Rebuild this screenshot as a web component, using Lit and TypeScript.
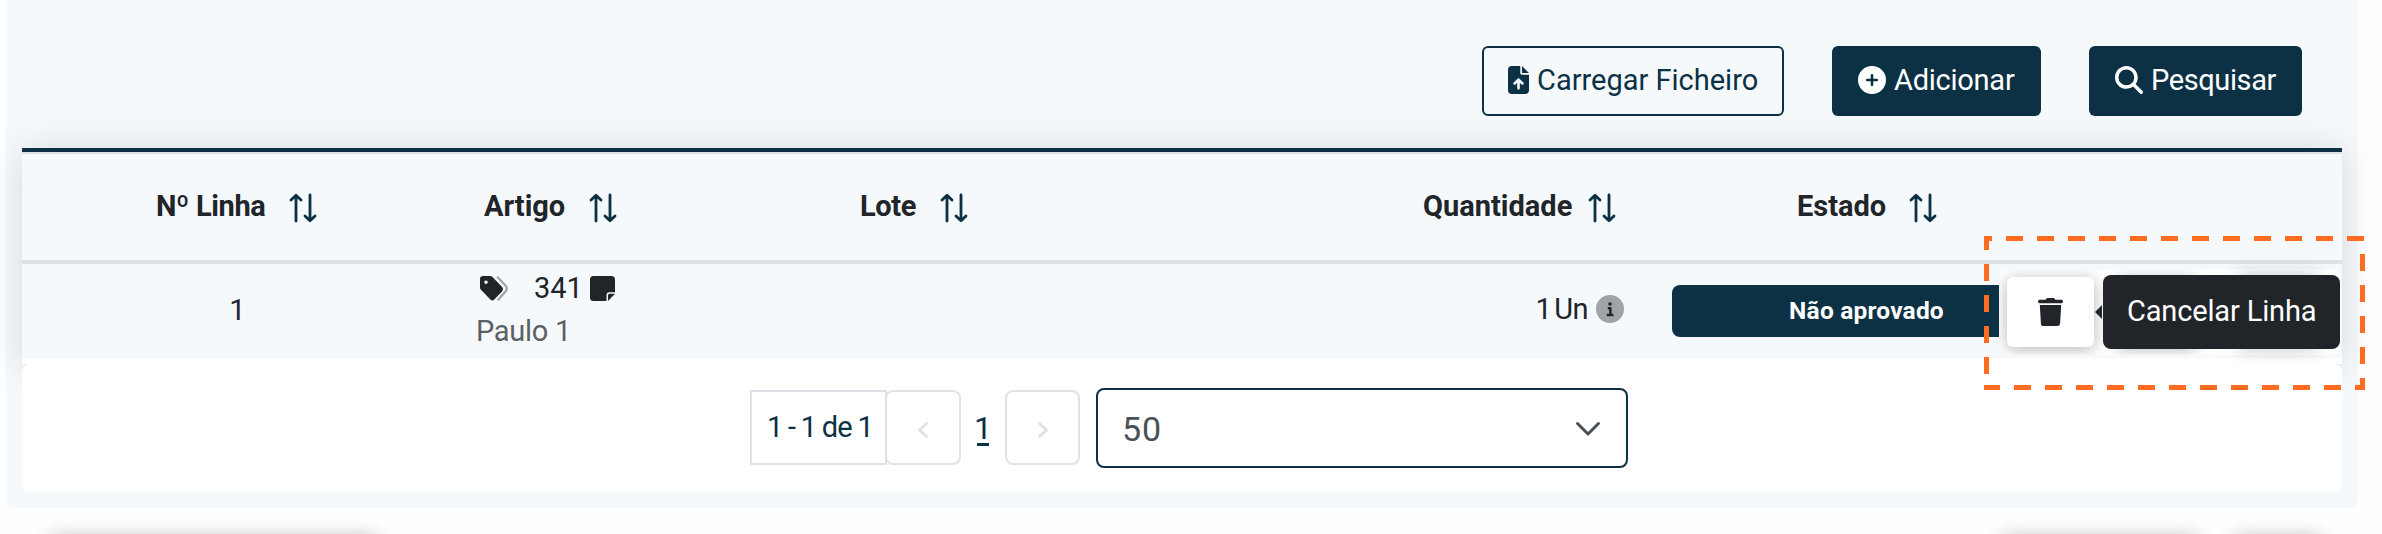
import { LitElement, html, css, svg } from "lit";
import { customElement } from "lit/decorators.js";

const icon = (cls: string, box: string, body: unknown) =>
  html`<svg class="icon ${cls}" viewBox=${box} preserveAspectRatio="none" aria-hidden="true">${body}</svg>`;

const fileUp = () => icon("file", "0 0 384 512", svg`<path d="M64 0C28.7 0 0 28.7 0 64V448c0 35.3 28.7 64 64 64H320c35.3 0 64-28.7 64-64V160H256c-17.7 0-32-14.3-32-32V0H64zM256 0V128H384L256 0zM216 408c0 13.3-10.7 24-24 24s-24-10.7-24-24V305.9l-31 31c-9.4 9.4-24.6 9.4-33.9 0s-9.4-24.6 0-33.9l72-72c9.4-9.4 24.6-9.4 33.9 0l72 72c9.4 9.4 9.4 24.6 0 33.9s-24.6 9.4-33.9 0l-31-31V408z"/>`);
const plus = () => icon("sq", "0 0 512 512", svg`<path d="M256 512A256 256 0 1 0 256 0a256 256 0 1 0 0 512zM232 344V280H168c-13.3 0-24-10.7-24-24s10.7-24 24-24h64V168c0-13.3 10.7-24 24-24s24 10.7 24 24v64h64c13.3 0 24 10.7 24 24s-10.7 24-24 24H280v64c0 13.3-10.7 24-24 24s-24-10.7-24-24z"/>`);
const search = () => icon("sq", "0 0 512 512", svg`<path d="M416 208c0 45.9-14.9 88.3-40 122.7L502.6 457.4c12.5 12.5 12.5 32.8 0 45.3s-32.8 12.5-45.3 0L330.7 376c-34.4 25.2-76.8 40-122.7 40C93.1 416 0 322.9 0 208S93.1 0 208 0S416 93.1 416 208zM208 352a144 144 0 1 0 0-288 144 144 0 1 0 0 288z"/>`);
const sort = () => icon("sort", "0 0 26 28", svg`<g class="line"><path d="M6 27V1.5M1 6 6 1.2 11 6"/><path d="M20 1V26.500M15 22 20 26.800 25 22"/></g>`);
const tags = () => icon("tags", "0 0 28 25", svg`<path fill-rule="evenodd" d="M0 3.200V11.500Q0 12.800 .9 13.800L10.400 23.600Q12.400 25.400 14.300 23.600L22.200 15.200Q24 13 22.200 11L12.500 1Q11.500 0 10.200 0H3.200Q0 0 0 3.200ZM6 4.400A1.800 1.800 0 1 1 5.990 4.400Z"/><path class="tagback" d="M17.600 1.300 25.500 9.600Q28 12.500 25.500 15.600L18.200 23.700"/>`);
const note = () => icon("note", "0 0 25 25", svg`<path d="M3.500 0H21.500Q25 0 25 3.500V16.300H19.500Q16.500 16.300 16.500 19.300V25H3.500Q0 25 0 21.500V3.500Q0 0 3.500 0Z"/><path d="M18 25V19.300Q18 17.800 19.500 17.800H25Z"/>`);
const info = () => icon("sq", "0 0 28 28", svg`<circle cx="14" cy="14" r="14" fill="#a0a4a8"/><circle cx="14" cy="9" r="1.800"/><path class="infoline" d="M11.800 13.200H14.400V19.800M10.800 20H17.500"/>`);
const trash = () => icon("trash", "0 0 25 28", svg`<path d="M1.500 1.800H7.500L8.300.7Q8.800 0 9.700 0H15.300Q16.200 0 16.700.7L17.500 1.800H23.500Q25 1.800 25 3.500T23.500 5.300H1.500Q0 5.300 0 3.500T1.500 1.800ZM1.800 7H23.200L22.100 25.400Q21.900 28 19.400 28H5.600Q3.100 28 2.900 25.400Z"/>`);
const chevron = (cls: string, d: string, box: string) => icon(cls, box, svg`<path d=${d}/>`);

@customElement("app-root")
export class AppRoot extends LitElement {
  static styles = css`
    :host {
      display: block; position: relative; height: 534px; overflow: hidden;
      background: #fefefe; color: #212529; font: 29px/40px Roboto, sans-serif;
    }
    * { box-sizing: border-box; }
    .icon { display: block; flex: none; fill: currentColor; overflow: visible; }
    .file { width: 21px; height: 28px; }
    .sq { width: 28px; height: 28px; }
    .sort { width: 26px; height: 28px; color: #0c3144; }
    .line, .infoline, .tagback, .prev, .next, .down { fill: none; stroke: currentColor; stroke-linecap: round; stroke-linejoin: round; }
    .line { stroke-width: 2.800; }
    .infoline { stroke-width: 2.400; stroke-linecap: butt; }
    .tagback { stroke-width: 2.200; opacity: .4; }
    .tags { width: 28px; height: 25px; }
    .note { width: 25px; height: 25px; }
    .trash { width: 25px; height: 28px; }
    .prev, .next { width: 10px; height: 16px; stroke-width: 3; color: #dee2e3; }
    .down { width: 24px; height: 14px; stroke-width: 3; color: #495057; }
    .t { display: block; white-space: nowrap; flex: none; }

    .panel { margin: 0 24px 0 6px; height: 508px; padding: 46px 16px 0; background: #f5f9fc; border-radius: 0 0 8px 8px; }
    .actions { display: flex; justify-content: flex-end; gap: 48px; padding-right: 40px; height: 102px; }
    .btn { display: flex; align-items: center; gap: 8px; height: 70px; padding: 0 0 2px 26px; border-radius: 6px; background: #0c3144; color: #fff; }
    .upload { width: 302px; border: 2px solid #0c3144; background: #f5f9fc; color: #0c3144; padding-left: 24px; }
    .add { width: 209px; }
    .find { width: 213px; }
    .w-add { letter-spacing: -.25px; }
    .w-find { letter-spacing: -.4px; }

    .table { height: 216px; border-top: 4px solid #0c3144; background: #fff; box-shadow: 0 2px 36px rgba(0,0,0,.13); }
    .row { display: grid; grid-template-columns: 429px 198px 530px 469px 437px 1fr; background: #f5f9fc; }
    .head { height: 112px; border-top: 2px solid #dee2e4; border-bottom: 4px solid #dee2e4; font-weight: 700; }
    .body { height: 94px; }
    .cell { display: flex; align-items: center; justify-content: center; }
    .head .cell { padding-top: 2px; }
    .head .t { padding-bottom: 5px; }
    .gap { gap: 24px; }
    .head .tight { letter-spacing: -.35px; text-indent: -1px; }
    .qh { justify-content: flex-end; gap: 17px; padding-right: 33px; }
    .qb { justify-content: flex-end; gap: 8px; padding: 0 24px 4px 0; }
    .qty { word-spacing: -3.500px; letter-spacing: -.6px; }
    .one { padding: 0 0 3px 2px; }
    .article { padding: 3px 0 0 25px; }
    .code { display: flex; align-items: center; height: 42px; padding-left: 4px; }
    .code .num { margin: 0 7px 0 26px; }
    .name { color: #5c6064; padding-top: 2px; letter-spacing: -.3px; }
    .badge { width: 389px; height: 52px; border-radius: 8px; background: #0c3144; color: #fff; font-weight: 700; font-size: 24.500px; letter-spacing: .2px; display: flex; align-items: center; justify-content: center; padding-bottom: 1px; }

    .pager { display: flex; align-items: center; height: 128px; padding: 0 0 1px 728px; background: #fff; border-radius: 8px; color: #0c3144; }
    .range { width: 137px; height: 75px; border: 2px solid #dee2e6; padding: 15px 0 0 15px; letter-spacing: -.7px; word-spacing: -1.100px; }
    .step { width: 76px; height: 75px; margin-left: -2px; border: 2px solid #e0e2e3; border-radius: 8px; display: flex; align-items: center; justify-content: center; padding-top: 4px; }
    .nextbtn { margin-left: 16px; width: 75px; }
    .page { width: 12px; margin-left: 16px; height: 32px; border-bottom: 3px solid #0c3144; font-size: 32px; line-height: 29px; text-indent: -3px; margin-top: 4px; }
    .select { margin-left: 16px; width: 532px; height: 80px; border: 2px solid #0c3144; border-radius: 8px; display: flex; align-items: center; justify-content: space-between; padding: 2px 26px 0 24px; color: #495057; }
    .size { font-size: 34px; letter-spacing: .8px; padding-top: 1px; }

    .tools { position: absolute; left: 1999px; top: 269px; width: 341px; height: 86px; padding: 8px; display: flex; background: #fff; border-radius: 8px; overflow: hidden; }
    .tool { width: 81px; height: 70px; flex: none; border-radius: 6px; background: #fff; box-shadow: 0 2px 16px rgba(0,0,0,.3); display: flex; align-items: center; justify-content: center; }
    .tools .first { width: 87px; }
    .second { margin-left: 22px; }
    .third { position: absolute; left: 2237px; top: 277px; width: 81px; height: 70px; border-radius: 6px; box-shadow: 0 0 20px rgba(0,0,0,.28); }
    .tip { position: absolute; left: 2095px; top: 275px; display: flex; align-items: center; }
    .arrow { width: 0; border: 7px solid transparent; border-right-color: #212529; border-left: 0; margin-right: 1px; }
    .bubble { width: 237px; height: 74px; border-radius: 8px; background: #212529; color: #fff; padding: 16px 0 0 24px; letter-spacing: -.15px; }
    .mark { position: absolute; left: 1984px; top: 236px; width: 381px; height: 154px; }
    .mark path { fill: none; stroke: #ff6b1f; stroke-width: 5; stroke-dasharray: 17 14; }
    .footer { display: flex; padding: 28px 60px 0 50px; }
    .ghost { height: 70px; border-radius: 6px; background: #fff; box-shadow: 0 0 18px rgba(0,0,0,.24); }
    .g1 { width: 328px; margin-right: auto; }
    .g2 { width: 196px; margin-right: 36px; }
    .g3 { width: 88px; }
  `;

  private heading(label: string, width: number, cls = "gap", textCls = "") {
    return html`<div class="cell ${cls}"><span class="t ${textCls}" style="width:${width}px">${label}</span>${sort()}</div>`;
  }

  render() {
    return html`
      <main class="panel">
        <div class="actions">
          <div class="btn upload">${fileUp()}<span class="t">Carregar Ficheiro</span></div>
          <div class="btn add">${plus()}<span class="t w-add">Adicionar</span></div>
          <div class="btn find">${search()}<span class="t w-find">Pesquisar</span></div>
        </div>
        <div class="table">
          <div class="row head">
            ${this.heading("Nº Linha", 109, "gap", "tight")}${this.heading("Artigo", 82)}${this.heading("Lote", 56, "gap", "tight")}
            ${this.heading("Quantidade", 149, "qh")}${this.heading("Estado", 89)}
          </div>
          <div class="row body">
            <div class="cell one">1</div>
            <div class="article">
              <div class="code">${tags()}<span class="t num">341</span>${note()}</div>
              <span class="t name">Paulo 1</span>
            </div>
            <div></div>
            <div class="cell qb"><span class="t qty">1 Un</span>${info()}</div>
            <div class="cell"><div class="badge"><span class="t">Não aprovado</span></div></div>
          </div>
        </div>
        <div class="pager">
          <div class="range"><span class="t">1 - 1 de 1</span></div>
          <div class="step">${chevron("prev", "M8.500 1.500 1.500 8 8.500 14.500", "0 0 10 16")}</div>
          <div class="t page">1</div>
          <div class="step nextbtn">${chevron("next", "M1.500 1.500 8.500 8 1.500 14.500", "0 0 10 16")}</div>
          <div class="select"><span class="t size">50</span>${chevron("down", "M1.500 1.500 12 12 22.500 1.500", "0 0 24 14")}</div>
        </div>
      </main>
      <div class="footer"><div class="ghost g1"></div><div class="ghost g2"></div><div class="ghost g3"></div></div>
      <div class="tools"><div class="tool first">${trash()}</div><div class="tool second"></div></div>
      <div class="third"></div>
      <div class="tip"><div class="arrow"></div><div class="bubble"><span class="t">Cancelar Linha</span></div></div>
      <svg class="mark" viewBox="0 0 381 154">
        <path d="M0 2.500H381" stroke-dashoffset="9"/>
        <path d="M378.500 5V154" stroke-dashoffset="18"/>
        <path d="M0 151.500H381" stroke-dashoffset="1"/>
        <path d="M2.500 0V154" stroke-dashoffset="3"/>
      </svg>
    `;
  }
}
